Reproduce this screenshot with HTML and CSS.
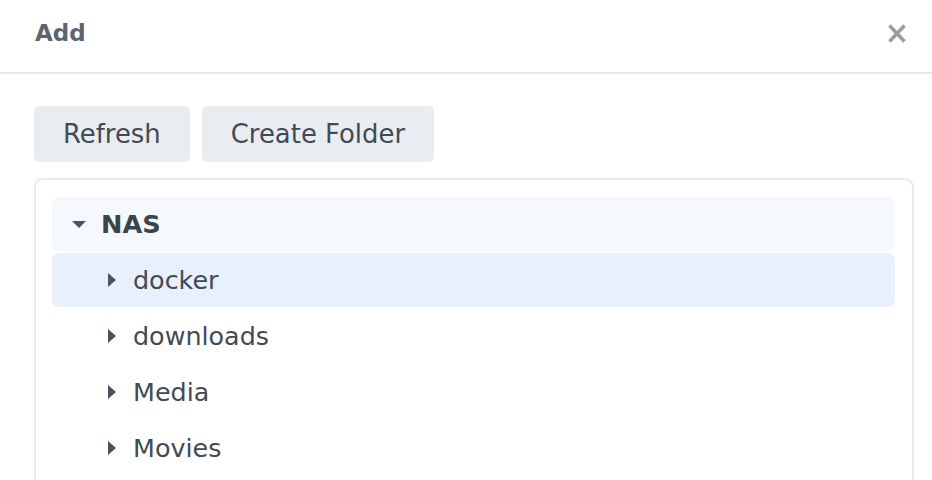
FILE: index.html
```html
<!DOCTYPE html>
<html>
<head>
<meta charset="utf-8">
<link rel="stylesheet" href="styles.css">
</head>
<body>
<div class="dialog">
  <div class="header">
    <span class="title">Add</span>
    <button class="close" aria-label="Close">
      <svg width="18" height="19" viewBox="0 0 18 19"><path d="M1.5 1.5 L16.5 17.5 M16.5 1.5 L1.5 17.5" stroke="#9a9ea4" stroke-width="3.6" fill="none"/></svg>
    </button>
  </div>
  <div class="body">
    <div class="toolbar">
      <button class="btn">Refresh</button>
      <button class="btn">Create Folder</button>
    </div>
    <div class="tree">
      <div class="row root">
        <span class="arrow"><svg width="14" height="7" viewBox="0 0 14 7"><path d="M0 0 H14 L7 7 Z" fill="#4a525c"/></svg></span>
        <span class="label">NAS</span>
      </div>
      <div class="row child selected">
        <span class="arrow"><svg width="8" height="14" viewBox="0 0 8 14"><path d="M0 0 L8 7 L0 14 Z" fill="#4a525c"/></svg></span>
        <span class="label">docker</span>
      </div>
      <div class="row child">
        <span class="arrow"><svg width="8" height="14" viewBox="0 0 8 14"><path d="M0 0 L8 7 L0 14 Z" fill="#4a525c"/></svg></span>
        <span class="label">downloads</span>
      </div>
      <div class="row child">
        <span class="arrow"><svg width="8" height="14" viewBox="0 0 8 14"><path d="M0 0 L8 7 L0 14 Z" fill="#4a525c"/></svg></span>
        <span class="label">Media</span>
      </div>
      <div class="row child">
        <span class="arrow"><svg width="8" height="14" viewBox="0 0 8 14"><path d="M0 0 L8 7 L0 14 Z" fill="#4a525c"/></svg></span>
        <span class="label">Movies</span>
      </div>
    </div>
  </div>
</div>
</body>
</html>
```
FILE: styles.css
```css
* { box-sizing: border-box; }
html, body { margin: 0; padding: 0; background: #fff; }
body { font-family: "DejaVu Sans", Verdana, sans-serif; color: #424a54; overflow: hidden; }
.header {
  height: 74px;
  border-bottom: 2px solid #e4e7eb;
  display: flex;
  align-items: center;
  justify-content: space-between;
  padding: 0 26px 0 35px;
}
.title { font-weight: bold; font-size: 23px; color: #5c6570; margin-top: -6px; }
.close { border: 0; background: none; padding: 0; display: flex; margin-top: -6px; }
.body { padding: 32px 18px 0 34px; }
.toolbar { display: flex; gap: 12px; }
.btn {
  font-family: inherit;
  font-size: 25.9px;
  color: #424a54;
  background: #e9edf1;
  border: 0;
  border-radius: 5px;
  height: 56px;
  padding: 0 29px;
}
.tree {
  margin-top: 16px;
  border: 2px solid #e6e9ee;
  border-radius: 9px;
  padding: 17px 17px 0 16px;
  height: 320px;
}
.row {
  height: 54px;
  margin-bottom: 2px;
  border-radius: 7px;
  display: flex;
  align-items: center;
  font-size: 25.4px;
}
.row.root { background: #f5f8fd; padding-left: 20px; }
.row.root .arrow { width: 29px; }
.row.root .label { font-weight: bold; color: #3b434c; font-size: 25.6px; }
.row.child { padding-left: 56px; }
.row.child .arrow { width: 25px; }
.row.selected { background: #e8f0fb; }
.arrow { display: flex; align-items: center; }
.label { margin-top: -1px; }
```
